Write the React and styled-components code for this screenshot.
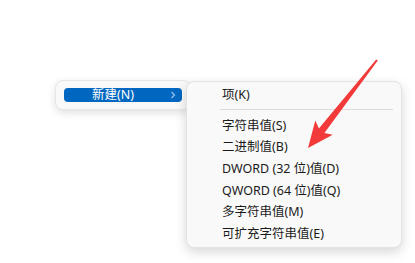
import React from 'react';
import styled, { createGlobalStyle } from 'styled-components';

const GlobalStyle = createGlobalStyle`
  html, body {
    margin: 0;
    padding: 0;
    background: #ffffff;
  }
  body {
    font-family: "Noto Sans", "Noto Sans CJK SC", sans-serif;
  }
`;

const items = [
  '字符串值(S)',
  '二进制值(B)',
  'DWORD (32 位)值(D)',
  'QWORD (64 位)值(Q)',
  '多字符串值(M)',
  '可扩充字符串值(E)',
];

const App = () => {
  return (
    <>
      <GlobalStyle />
      <Page>
        <MenuAnchor>
          <ParentMenu>
            <ParentItem>
              <span>新建(N)</span>
              <Chevron viewBox='0 0 6 8'>
                <path d='M1.5 1 L4.5 4 L1.5 7' />
              </Chevron>
            </ParentItem>
          </ParentMenu>
          <SubMenu>
            <SubItem>项(K)</SubItem>
            <Separator />
            {items.map((label) => (
              <SubItem key={label}>{label}</SubItem>
            ))}
          </SubMenu>
        </MenuAnchor>
        <Annotation viewBox='0 0 415 263'>
          <polygon points='377.8,60.6 324.4,132.9 332.7,134.8 308,148 315.3,120.4 318.9,128.5 376.2,59.4' />
        </Annotation>
      </Page>
    </>
  );
};

const Page = styled.div`
  position: relative;
  width: 415px;
  height: 263px;
  padding: 80px 0 0 55px;
  box-sizing: border-box;
  overflow: hidden;
`;

const MenuAnchor = styled.div`
  position: relative;
  width: 136px;
`;

const ParentMenu = styled.div`
  box-sizing: border-box;
  width: 136px;
  padding: 7px 8px;
  background: #f9f9f9;
  border: 1px solid #e6e6e6;
  border-radius: 8px;
  box-shadow: 0 3px 8px rgba(0, 0, 0, 0.12);
`;

const ParentItem = styled.div`
  display: flex;
  align-items: center;
  justify-content: space-between;
  height: 14px;
  padding: 0 6px 0 28px;
  background: #0067c0;
  border-radius: 4px;
  color: #ffffff;
  font-size: 12.5px;
  line-height: 14px;
`;

const Chevron = styled.svg`
  width: 6px;
  height: 8px;
  fill: none;
  stroke: #9cc3e8;
  stroke-width: 1.2;
`;

const SubMenu = styled.div`
  position: absolute;
  left: 131px;
  top: 1px;
  box-sizing: border-box;
  width: 216px;
  padding: 1px 0 4px;
  background: #f9f9f9;
  border: 1px solid #e3e3e3;
  border-radius: 8px;
  box-shadow: 0 4px 12px rgba(0, 0, 0, 0.16);
`;

const SubItem = styled.div`
  height: 21.6px;
  display: flex;
  align-items: center;
  padding-left: 35px;
  color: #1b1b1b;
  font-size: 12.5px;
  white-space: nowrap;
`;

const Separator = styled.div`
  height: 1px;
  margin: 4px 8px 4px 33px;
  background: #dcdcdc;
`;

const Annotation = styled.svg`
  position: absolute;
  left: 0;
  top: 0;
  width: 415px;
  height: 263px;
  pointer-events: none;
  fill: #f23a3a;
`;

export default App;
